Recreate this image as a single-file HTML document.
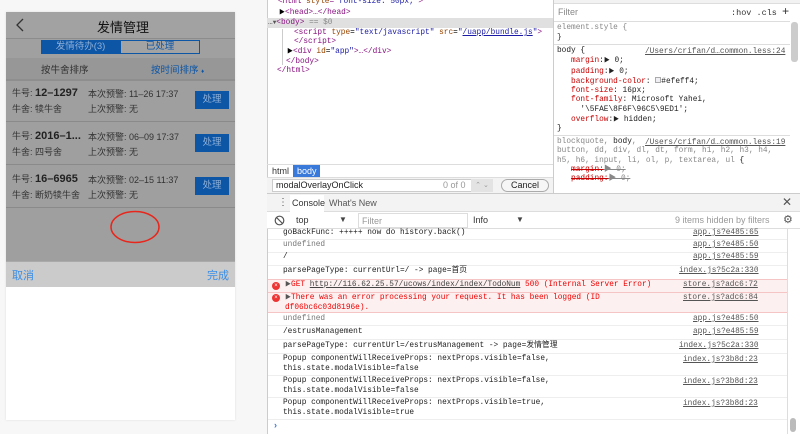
<!DOCTYPE html>
<html><head><meta charset="utf-8"><style>
*{margin:0;padding:0;box-sizing:border-box}
body{width:800px;height:434px;overflow:hidden;background:#f7f7f7;position:relative;font-family:"Liberation Sans","Noto Sans CJK SC",sans-serif}
.a{position:absolute;white-space:nowrap}
.m{font-family:"Liberation Mono","Noto Sans CJK SC",monospace;font-size:7.8px;line-height:10px}
.s{font-family:"Liberation Sans","Noto Sans CJK SC",sans-serif}
.cj{font-family:"Liberation Sans","Noto Sans CJK SC",sans-serif}
.lnk{text-decoration:underline;color:#555}
.tag{color:#881280}.at{color:#994500}.av{color:#1a1aa6}
.prop{color:#c80000}
.row{position:absolute;left:268px;width:519px;border-bottom:1px solid #eee}
</style></head><body>
<!-- phone -->
<div class="a" style="left:6px;top:12px;width:229px;height:408px;background:#fff;box-shadow:0 0 2px #ddd"></div>
<div class="a" style="left:6px;top:12px;width:229px;height:26px;background:#a2a2a2"></div>
<svg class="a" style="left:14px;top:18px" width="12" height="14"><path d="M9 1 L3 7 L9 13" stroke="#333" stroke-width="1.3" fill="none"/></svg>
<div class="a cj" style="left:97px;top:17px;font-size:13px;color:#111">发情管理</div>
<div class="a" style="left:6px;top:38px;width:229px;height:20px;background:#a0a0a0;border-top:1px solid #8c8c8c"></div>
<div class="a cj" style="left:41px;top:40px;width:79px;height:14px;background:#0d56a6;color:#8fb0d8;font-size:9.5px;text-align:center;line-height:14px">发情待办(3)</div>
<div class="a cj" style="left:120px;top:40px;width:80px;height:14px;border:1px solid #0d56a6;background:#a3a3a3;color:#0d56a6;font-size:9.5px;text-align:center;line-height:12px">已处理</div>
<div class="a" style="left:6px;top:58px;width:229px;height:21px;background:#979797"></div>
<div class="a cj" style="left:41px;top:62px;font-size:9.5px;color:#333">按牛舍排序</div>
<div class="a cj" style="left:151px;top:62px;font-size:9.5px;color:#0d56a6">按时间排序 <span style="font-size:6px">♦</span></div>
<div class="a" style="left:6px;top:79px;width:229px;height:182px;background:#9f9f9f"></div>
<div class="a" style="left:6px;top:79px;width:229px;height:2px;background:#8e8e8e"></div>
<div class="a" style="left:6px;top:121px;width:229px;height:1px;background:#8a8a8a"></div>
<div class="a" style="left:6px;top:164px;width:229px;height:1px;background:#8a8a8a"></div>
<div class="a" style="left:6px;top:207px;width:229px;height:1px;background:#8a8a8a"></div>

<div class="a cj" style="left:12px;top:86px;font-size:9px;color:#333">牛号: <b style="font-size:11px;color:#222">12–1297</b></div>
<div class="a cj" style="left:12px;top:102px;font-size:9px;color:#333">牛舍: 犊牛舍</div>
<div class="a cj" style="left:88px;top:87px;font-size:9px;color:#333">本次预警: 11–26 17:37</div>
<div class="a cj" style="left:88px;top:102px;font-size:9px;color:#333">上次预警: 无</div>
<div class="a cj" style="left:195px;top:91px;width:34px;height:18px;background:#0d56a6;color:#8fb0d8;font-size:9.5px;text-align:center;line-height:18px">处理</div>

<div class="a cj" style="left:12px;top:129px;font-size:9px;color:#333">牛号: <b style="font-size:11px;color:#222">2016–1...</b></div>
<div class="a cj" style="left:12px;top:145px;font-size:9px;color:#333">牛舍: 四号舍</div>
<div class="a cj" style="left:88px;top:130px;font-size:9px;color:#333">本次预警: 06–09 17:37</div>
<div class="a cj" style="left:88px;top:145px;font-size:9px;color:#333">上次预警: 无</div>
<div class="a cj" style="left:195px;top:134px;width:34px;height:18px;background:#0d56a6;color:#8fb0d8;font-size:9.5px;text-align:center;line-height:18px">处理</div>

<div class="a cj" style="left:12px;top:172px;font-size:9px;color:#333">牛号: <b style="font-size:11px;color:#222">16–6965</b></div>
<div class="a cj" style="left:12px;top:188px;font-size:9px;color:#333">牛舍: 断奶犊牛舍</div>
<div class="a cj" style="left:88px;top:173px;font-size:9px;color:#333">本次预警: 02–15 11:37</div>
<div class="a cj" style="left:88px;top:188px;font-size:9px;color:#333">上次预警: 无</div>
<div class="a cj" style="left:195px;top:177px;width:34px;height:18px;background:#0d56a6;color:#8fb0d8;font-size:9.5px;text-align:center;line-height:18px">处理</div>
<svg class="a" style="left:108px;top:209px" width="56" height="37"><ellipse cx="27" cy="18" rx="24" ry="15.5" stroke="#e8261c" stroke-width="1.5" fill="none"/></svg>
<div class="a" style="left:6px;top:261px;width:229px;height:26px;background:#cbcbcb;border-top:1px solid #aaa"></div>
<div class="a cj" style="left:12px;top:267px;font-size:11px;color:#3a8ee6">取消</div>
<div class="a cj" style="left:207px;top:267px;font-size:11px;color:#3a8ee6">完成</div>

<!-- devtools -->
<div class="a" style="left:267px;top:0;width:533px;height:434px;background:#fff;border-left:1px solid #ccc"></div>
<div class="a" style="left:267px;top:18px;width:286px;height:10px;background:#e0e0e0"></div>
<div class="a m" style="left:278px;top:-3px;color:#881280">&lt;html <span class="at">style</span>=<span class="av">"font-size: 50px;"</span>&gt;</div>
<div class="a m" style="left:279px;top:8px"><span style="font-size:6px">▶</span><span class="tag">&lt;head&gt;…&lt;/head&gt;</span></div>
<div class="a m" style="left:268px;top:18px;color:#555">…<span style="font-size:6px">▼</span><span class="tag">&lt;body&gt;</span> <span style="color:#888">== $0</span></div>
<div class="a" style="left:282px;top:29px;width:1px;height:36px;background:#ccc"></div>
<div class="a m" style="left:294px;top:28px"><span class="tag">&lt;script</span> <span class="at">type</span>=<span class="av">"text/javascript"</span> <span class="at">src</span>=<span class="av">"<u>/uapp/bundle.js</u>"</span><span class="tag">&gt;</span></div>
<div class="a m tag" style="left:294px;top:37px">&lt;/script&gt;</div>
<div class="a m" style="left:287px;top:47px"><span style="font-size:6px">▶</span><span class="tag">&lt;div</span> <span class="at">id</span>=<span class="av">"app"</span><span class="tag">&gt;…&lt;/div&gt;</span></div>
<div class="a m tag" style="left:286px;top:57px">&lt;/body&gt;</div>
<div class="a m tag" style="left:277px;top:66px">&lt;/html&gt;</div>
<div class="a" style="left:267px;top:164px;width:286px;height:1px;background:#ddd"></div>
<div class="a s" style="left:272px;top:166px;font-size:9px;color:#333">html</div>
<div class="a s" style="left:293px;top:165px;width:27px;height:12px;background:#3879d9;color:#fff;font-size:9px;padding-left:4px;line-height:12px">body</div>
<div class="a" style="left:267px;top:177px;width:286px;height:16px;background:#f3f3f3;border-top:1px solid #ddd"></div>
<div class="a s" style="left:272px;top:179px;width:200px;height:13px;background:#fff;border:1px solid #ccc;font-size:9px;padding-left:3px;line-height:11px;color:#222">modalOverlayOnClick<span style="position:absolute;left:170px;color:#999">0 of 0</span></div>
<div class="a" style="left:471px;top:179px;width:22px;height:13px;background:#e3e3e3;color:#999;font-size:7px;text-align:center;line-height:13px">⌃ ⌄</div>
<div class="a s" style="left:501px;top:179px;width:48px;height:13px;border:1px solid #aaa;border-radius:7px;background:#f6f6f6;font-size:9px;text-align:center;line-height:11px;color:#222">Cancel</div>
<div class="a" style="left:553px;top:0;width:1px;height:193px;background:#ccc"></div>
<div class="a" style="left:554px;top:0;width:246px;height:4px;background:#f2f2f2;border-bottom:1px solid #ddd"></div>
<div class="a s" style="left:558px;top:7px;font-size:9px;color:#888">Filter</div>
<div class="a m" style="left:731px;top:7px;color:#333;font-size:8.5px">:hov .cls <span style="font-size:12px">+</span></div>
<div class="a" style="left:554px;top:21px;width:236px;height:1px;background:#ddd"></div>
<div class="a" style="left:791px;top:22px;width:7px;height:40px;background:#ccc;border-radius:3px"></div>
<div class="a m" style="left:557px;top:23px;color:#888;line-height:10px">element.style {<br><span style="color:#333">}</span></div>
<div class="a" style="left:554px;top:44px;width:236px;height:1px;background:#ddd"></div>
<div class="a m" style="left:557px;top:47px;color:#222;line-height:9.3px">body {<br>
&nbsp;&nbsp;&nbsp;<span class="prop">margin</span>:<span style="font-size:6px">▶</span> 0;<br>
&nbsp;&nbsp;&nbsp;<span class="prop">padding</span>:<span style="font-size:6px">▶</span> 0;<br>
&nbsp;&nbsp;&nbsp;<span class="prop">background-color</span>: <span style="display:inline-block;width:6px;height:6px;border:1px solid #aaa;background:#efeff4"></span>#efeff4;<br>
&nbsp;&nbsp;&nbsp;<span class="prop">font-size</span>: 16px;<br>
&nbsp;&nbsp;&nbsp;<span class="prop">font-family</span>: Microsoft Yahei,<br>
&nbsp;&nbsp;&nbsp;&nbsp;&nbsp;'\5FAE\8F6F\96C5\9ED1';<br>
&nbsp;&nbsp;&nbsp;<span class="prop">overflow</span>:<span style="font-size:6px">▶</span> hidden;<br>}</div>
<div class="a m lnk" style="left:645px;top:47px">/Users/crifan/d…common.less:24</div>
<div class="a" style="left:554px;top:135px;width:236px;height:1px;background:#ddd"></div>
<div class="a m" style="left:557px;top:138px;color:#888;line-height:9.3px">blockquote, <span style="color:#222">body</span>,<br>button, dd, div, dl, dt, form, h1, h2, h3, h4,<br>h5, h6, input, li, ol, p, textarea, ul <span style="color:#222">{</span><br>
&nbsp;&nbsp;&nbsp;<s class="prop">margin:</s><s>▶ 0;</s><br>&nbsp;&nbsp;&nbsp;<s class="prop">padding:</s><s>▶ 0;</s></div>
<div class="a m lnk" style="left:645px;top:138px">/Users/crifan/d…common.less:19</div>

<!-- console -->
<div class="a" style="left:267px;top:193px;width:533px;height:19px;background:#f3f3f3;border-top:1px solid #ccc;border-bottom:1px solid #ddd"></div>
<div class="a" style="left:278px;top:197px;font-size:10px;color:#555">⋮</div>
<div class="a s" style="left:290px;top:195px;width:34px;height:17px;background:#fff;font-size:9px;color:#333;padding:3px 2px">Console</div>
<div class="a s" style="left:329px;top:198px;font-size:9px;color:#555">What's New</div>
<div class="a" style="left:782px;top:195px;font-size:12px;color:#555">✕</div>
<div class="a" style="left:267px;top:212px;width:533px;height:17px;background:#fff;border-bottom:1px solid #ddd"></div>
<svg class="a" style="left:274px;top:215px" width="11" height="11"><circle cx="5.5" cy="5.5" r="4.3" stroke="#555" stroke-width="1.2" fill="none"/><path d="M2.5 2.5 L8.5 8.5" stroke="#555" stroke-width="1.2"/></svg>
<div class="a s" style="left:296px;top:215px;font-size:9px;color:#333">top</div>
<div class="a" style="left:339px;top:215px;font-size:8px;color:#444">▼</div>
<div class="a s" style="left:358px;top:213px;width:110px;height:15px;border:1px solid #ddd;font-size:9px;color:#999;padding:2px 3px">Filter</div>
<div class="a s" style="left:473px;top:215px;font-size:9px;color:#333">Info</div>
<div class="a" style="left:516px;top:215px;font-size:8px;color:#444">▼</div>
<div class="a s" style="left:675px;top:215px;font-size:9px;color:#999">9 items hidden by filters</div>
<div class="a" style="left:783px;top:213px;font-size:11px;color:#555">⚙</div>

<div class="row" style="top:228px;height:12px"></div>
<div class="a m" style="left:283px;top:228px;color:#222">goBackFunc: +++++ now do history.back()</div>
<div class="a m lnk" style="left:693px;top:228px">app.js?e485:65</div>
<div class="row" style="top:240px;height:13px"></div>
<div class="a m" style="left:283px;top:240px;color:#777">undefined</div>
<div class="a m lnk" style="left:693px;top:240px">app.js?e485:50</div>
<div class="row" style="top:253px;height:13px"></div>
<div class="a m" style="left:283px;top:252px;color:#222">/</div>
<div class="a m lnk" style="left:693px;top:252px">app.js?e485:59</div>
<div class="row" style="top:266px;height:14px"></div>
<div class="a m" style="left:283px;top:266px;color:#222">parsePageType: currentUrl=/ -&gt; page=首页</div>
<div class="a m lnk" style="left:679px;top:266px">index.js?5c2a:330</div>
<div class="a" style="left:268px;top:279px;width:519px;height:34px;background:#fdf0f0;border-top:1px solid #f5c5c5;border-bottom:1px solid #f5c5c5"></div>
<div class="a" style="left:268px;top:292px;width:519px;height:1px;background:#f5c5c5"></div>
<div class="a" style="left:272px;top:282px;width:8px;height:8px;border-radius:50%;background:#e33;color:#fff;font-size:6px;text-align:center;line-height:8px">×</div>
<div class="a" style="left:272px;top:294px;width:8px;height:8px;border-radius:50%;background:#e33;color:#fff;font-size:6px;text-align:center;line-height:8px">×</div>
<div class="a m" style="left:285px;top:280px;color:#e00"><span style="font-size:6px;color:#555">▶</span>GET <span style="text-decoration:underline;color:#444">http://116.62.25.57/ucows/index/index/TodoNum</span> 500 (Internal Server Error)</div>
<div class="a m lnk" style="left:683px;top:280px">store.js?adc6:72</div>
<div class="a m" style="left:285px;top:293px;color:#e00;line-height:9.5px"><span style="font-size:6px;color:#555">▶</span>There was an error processing your request. It has been logged (ID<br>df06bc6c03d8196e).</div>
<div class="a m lnk" style="left:683px;top:293px">store.js?adc6:84</div>
<div class="row" style="top:313px;height:13px"></div>
<div class="a m" style="left:283px;top:314px;color:#777">undefined</div>
<div class="a m lnk" style="left:693px;top:314px">app.js?e485:50</div>
<div class="row" style="top:326px;height:14px"></div>
<div class="a m" style="left:283px;top:327px;color:#222">/estrusManagement</div>
<div class="a m lnk" style="left:693px;top:327px">app.js?e485:59</div>
<div class="row" style="top:340px;height:14px"></div>
<div class="a m" style="left:283px;top:341px;color:#222">parsePageType: currentUrl=/estrusManagement -&gt; page=发情管理</div>
<div class="a m lnk" style="left:679px;top:341px">index.js?5c2a:330</div>
<div class="row" style="top:354px;height:22px"></div>
<div class="a m" style="left:283px;top:355px;color:#222;line-height:9.5px">Popup componentWillReceiveProps: nextProps.visible=false,<br>this.state.modalVisible=false</div>
<div class="a m lnk" style="left:683px;top:355px">index.js?3b8d:23</div>
<div class="row" style="top:376px;height:22px"></div>
<div class="a m" style="left:283px;top:377px;color:#222;line-height:9.5px">Popup componentWillReceiveProps: nextProps.visible=false,<br>this.state.modalVisible=false</div>
<div class="a m lnk" style="left:683px;top:377px">index.js?3b8d:23</div>
<div class="row" style="top:398px;height:22px"></div>
<div class="a m" style="left:283px;top:399px;color:#222;line-height:9.5px">Popup componentWillReceiveProps: nextProps.visible=true,<br>this.state.modalVisible=true</div>
<div class="a m lnk" style="left:683px;top:399px">index.js?3b8d:23</div>
<div class="a" style="left:274px;top:420px;font-size:9px;color:#3879d9;font-weight:bold">›</div>
<div class="a" style="left:787px;top:229px;width:1px;height:205px;background:#ddd"></div>
<div class="a" style="left:790px;top:418px;width:6px;height:14px;background:#bbb;border-radius:3px"></div>
</body></html>
